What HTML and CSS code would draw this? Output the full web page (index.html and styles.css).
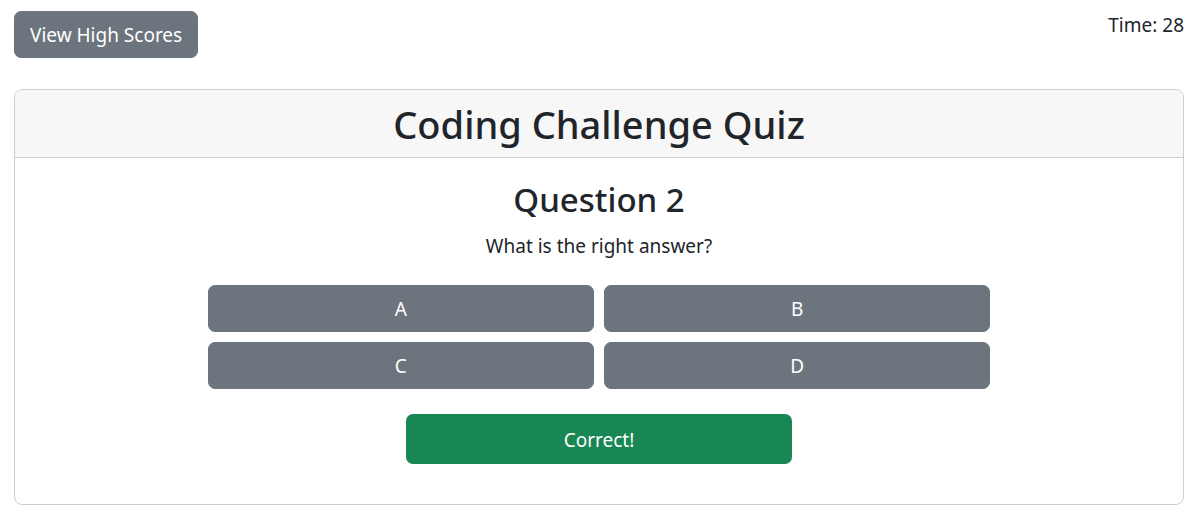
FILE: index.html
```html
<!DOCTYPE html>
<html lang="en">
<head>
<meta charset="utf-8">
<meta name="viewport" content="width=device-width, initial-scale=1">
<title>Coding Challenge Quiz</title>
<link rel="stylesheet" href="styles.css">
</head>
<body>
<header class="topbar">
  <button type="button" class="btn">View High Scores</button>
  <p class="timer">Time: 28</p>
</header>
<main class="card">
  <div class="card-header"><h1 class="title">Coding Challenge Quiz</h1></div>
  <div class="card-body">
    <h2 class="question">Question 2</h2>
    <p class="prompt">What is the right answer?</p>
    <div class="answers">
      <button type="button" class="btn">A</button>
      <button type="button" class="btn">B</button>
      <button type="button" class="btn">C</button>
      <button type="button" class="btn">D</button>
    </div>
    <p class="result" role="status">Correct!</p>
  </div>
</main>
</body>
</html>
```
FILE: styles.css
```css
* {
  box-sizing: border-box;
}

body {
  margin: 0;
  padding: 11px 14px 14px;
  background: #fff;
  color: #212529;
  font-family: "Segoe UI", "Noto Sans", "Open Sans", sans-serif;
  font-size: 19px;
  line-height: 29px;
}

h1, h2, p {
  margin: 0;
}

.topbar {
  display: flex;
  justify-content: space-between;
  align-items: flex-start;
  margin-bottom: 31px;
}

.btn {
  padding: 9px 15px 7px;
  border: 1px solid #6c757d;
  border-radius: 7px;
  background: #6c757d;
  color: #fff;
  font: inherit;
  cursor: pointer;
}

.card {
  border: 1px solid #cfcfcf;
  border-radius: 8px;
  text-align: center;
}

.card-header {
  padding: 11px 20px 9px;
  border-bottom: 1px solid #cfcfcf;
  border-radius: 7px 7px 0 0;
  background: #f7f7f7;
}

.title {
  font-size: 38px;
  font-weight: 500;
  line-height: 47px;
}

.card-body {
  padding: 20px 20px 40px;
}

.question {
  margin-bottom: 11px;
  font-size: 33px;
  font-weight: 500;
  line-height: 43px;
}

.answers {
  display: grid;
  grid-template-columns: 1fr 1fr;
  gap: 10px;
  width: 69.4%;
  margin: 24px auto 25px;
}

.result {
  width: 34.2%;
  margin: 0 auto;
  padding: 12px 15px 10px;
  border-radius: 7px;
  background: #198754;
  color: #fff;
  line-height: 28px;
}
```
